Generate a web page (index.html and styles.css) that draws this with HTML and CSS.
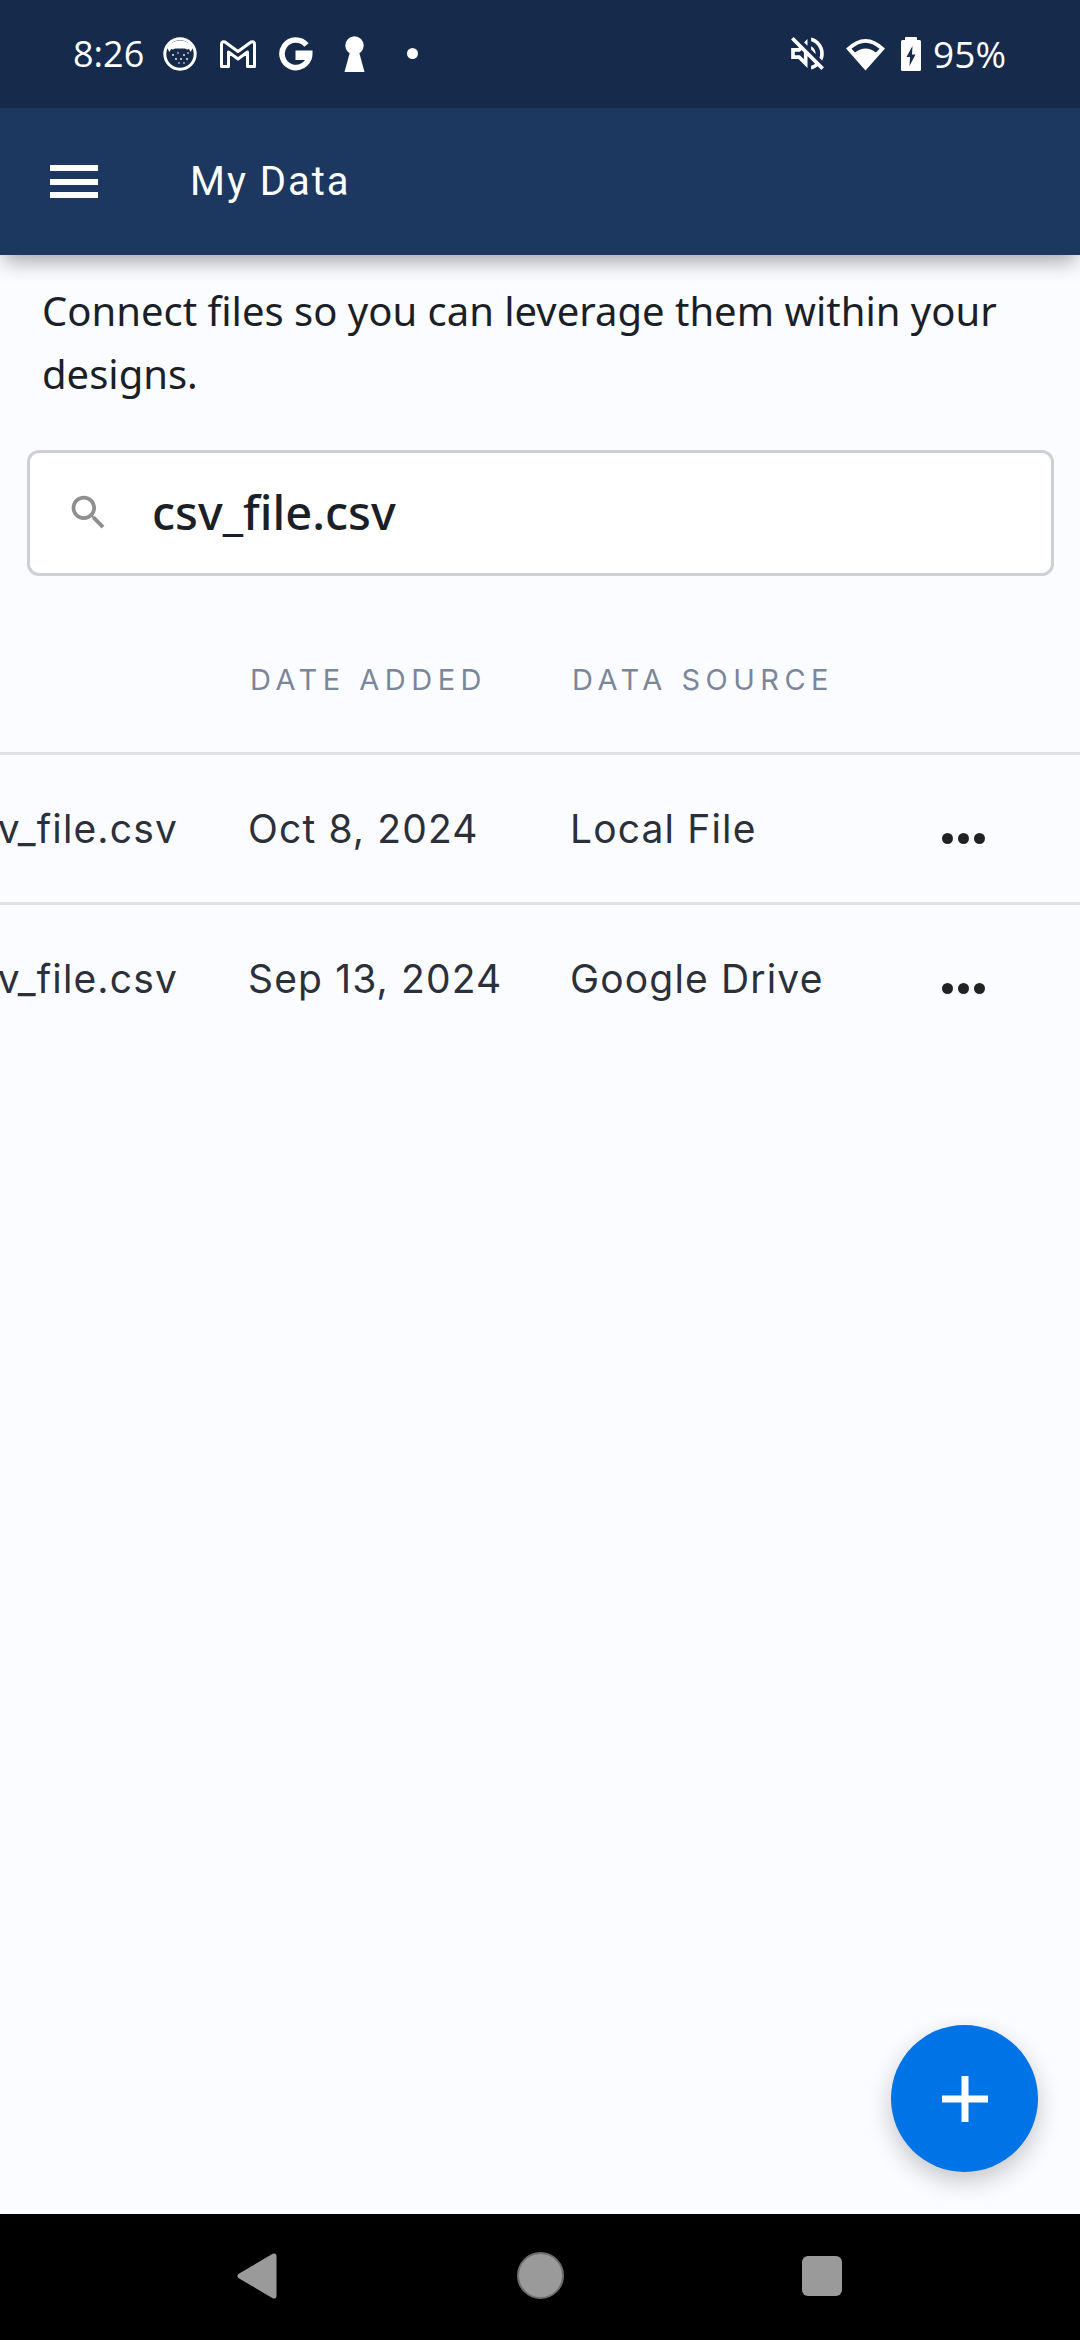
FILE: index.html
```html
<!DOCTYPE html>
<html lang="en">
<head>
<meta charset="utf-8">
<title>My Data</title>
<link rel="stylesheet" href="styles.css">
</head>
<body>
<div class="page">
  <div class="status">
    <div class="status-left">
      <span class="time">8:26</span>
      <svg class="ic-cup" viewBox="0 0 34 34"><circle cx="17" cy="17" r="15.2" fill="#162a4b" stroke="#fff" stroke-width="3"/><path d="M4 11A15 15 0 0 1 30 11L27.500 15 26 12 24 12.500 22 11.500H12L10 12.500 8 12 6.500 15Z" fill="#fff"/><g fill="#fff"><circle cx="10" cy="18" r=".9"/><circle cx="15" cy="16" r=".8"/><circle cx="21" cy="18" r=".9"/><circle cx="25" cy="16" r=".8"/><circle cx="13" cy="22" r=".9"/><circle cx="18" cy="22" r=".9"/><circle cx="24" cy="22" r=".9"/><circle cx="16" cy="26" r=".8"/><circle cx="21" cy="26" r=".8"/></g></svg>
      <svg class="ic-m" viewBox="0 0 36 28"><path d="M1.500 26.500V4.500Q1.500 .8 5 2L18 11.500 31 2Q34.500 .8 34.500 4.500V26.500H27.500V12L18 19 8.500 12V26.500Z" fill="none" stroke="#fff" stroke-width="3" stroke-linejoin="round"/></svg>
      <svg class="ic-g" viewBox="0 0 34 34"><path d="M27.500 8A13.800 13.800 0 1 0 30.500 18.500" fill="none" stroke="#fff" stroke-width="5.600"/><path d="M16.500 13.500H33.500V16.500Q33.500 21 32 23H16.500Z" fill="#fff"/></svg>
      <svg class="ic-key" viewBox="0 0 21 36"><circle cx="10.500" cy="9.500" r="9.200" fill="#fff"/><path d="M6.500 14H14.500L20.500 36H.5Z" fill="#fff"/></svg>
      <span class="dot"></span>
    </div>
    <div class="status-right">
      <svg class="ic-mute" viewBox="2.900 2.900 18.200 18.200"><path fill="#fff" d="M4.340 2.930L2.930 4.340 7.290 8.700 7 9H3v6h4l5 5v-6.590l4.180 4.180c-.65.490-1.380.880-2.180 1.110v2.060c1.340-.3 2.570-.920 3.610-1.750l2.050 2.050 1.410-1.410L4.340 2.930zM10 15.170L7.830 13H5v-2h2.830l.880-.880L10 11.410v3.760zM19 12c0 .820-.15 1.610-.41 2.340l1.530 1.530c.560-1.170.880-2.480.880-3.870 0-4.280-2.990-7.860-7-8.770v2.060c2.890.860 5 3.540 5 6.710zm-7-8l-1.880 1.880L12 7.760zm4.500 8c0-1.770-1.020-3.290-2.500-4.030v1.790l2.480 2.480c.010-.080.020-.160.020-.240z"/></svg>
      <svg class="ic-wifi" viewBox="0 0 39 34"><path fill="#fff" fill-rule="evenodd" d="M0 11.500Q19.500 -7.500 39 11.500L19.500 33.500ZM5.500 11.800 9 15.600Q19.500 7.500 30 15.600L33.500 11.800Q19.500 -.5 5.500 11.800Z"/></svg>
      <svg class="ic-batt" viewBox="0 0 20 34"><path fill="#fff" fill-rule="evenodd" d="M4 3V1Q4 0 5 0H15Q16 0 16 1V3H18.500Q20 3 20 4.500V32.500Q20 34 18.500 34H1.500Q0 34 0 32.500V4.500Q0 3 1.500 3ZM11.500 9 5.500 20H9L8.500 29 14.500 17.500H11Z"/></svg>
      <span class="pct">95%</span>
    </div>
  </div>

  <header class="appbar">
    <div class="burger"><span></span><span></span><span></span></div>
    <h1 class="title">My Data</h1>
  </header>

  <main class="main">
    <p class="intro">Connect files so you can leverage them within your designs.</p>
    <div class="search">
      <svg class="ic-search" viewBox="0 0 24 24"><path fill="#8f8f8f" d="M15.500 14h-.79l-.28-.27C15.410 12.590 16 11.110 16 9.500 16 5.910 13.090 3 9.500 3S3 5.910 3 9.500 5.910 16 9.500 16c1.610 0 3.090-.59 4.230-1.570l.27.28v.79l5 4.990L20.490 19l-4.990-5zm-6 0C7.010 14 5 11.990 5 9.500S7.010 5 9.500 5 14 7.010 14 9.500 11.990 14 9.500 14z"/></svg>
      <span class="search-text">csv_file.csv</span>
    </div>
    <div class="table">
      <div class="row head">
        <span class="cell"></span>
        <span class="cell th">DATE ADDED</span>
        <span class="cell th">DATA SOURCE</span>
        <span class="cell"></span>
      </div>
      <div class="row body">
        <span class="cell name"><span>csv_file.csv</span></span>
        <span class="cell">Oct 8, 2024</span>
        <span class="cell">Local File</span>
        <span class="cell more"><i></i><i></i><i></i></span>
      </div>
      <div class="row body last">
        <span class="cell name"><span>csv_file.csv</span></span>
        <span class="cell">Sep 13, 2024</span>
        <span class="cell">Google Drive</span>
        <span class="cell more"><i></i><i></i><i></i></span>
      </div>
    </div>
    <button class="fab" aria-label="Add"><svg viewBox="0 0 46 46"><path d="M19.500 0H26.500V19.500H46V26.500H26.500V46H19.500V26.500H0V19.500H19.500Z" fill="#fff"/></svg></button>
  </main>

  <nav class="navbar">
    <svg class="ic-back" viewBox="0 0 40 46"><path d="M37 3V43L3 23Z" fill="#9a9a9a" stroke="#9a9a9a" stroke-width="5" stroke-linejoin="round"/></svg>
    <span class="home"></span>
    <span class="recent"></span>
  </nav>
</div>
</body>
</html>
```
FILE: styles.css
```css
* { box-sizing: border-box; }
html, body { margin: 0; padding: 0; }
body { width: 1080px; height: 2340px; overflow: hidden; background: #fbfcff; }

.page { display: flex; flex-direction: column; width: 1080px; height: 2340px; }

/* status bar */
.status {
  flex: 0 0 108px;
  background: #162a4b;
  display: flex;
  justify-content: space-between;
  align-items: center;
  padding: 2px 74px 3px 73px;
  color: #fff;
  font-family: "Open Sans", sans-serif;
}
.status-left, .status-right { display: flex; align-items: center; }
.time { font-size: 36px; line-height: 40px; font-weight: 500; width: 90px; }
.ic-cup { width: 34px; height: 34px; }
.ic-m { width: 36px; height: 28px; margin-left: 23px; }
.ic-g { width: 34px; height: 34px; margin-left: 23px; }
.ic-key { width: 21px; height: 36px; margin-left: 31px; }
.dot { width: 11px; height: 11px; border-radius: 50%; background: #fff; margin-left: 42px; }
.ic-mute { width: 33px; height: 33px; }
.ic-wifi { width: 39px; height: 34px; margin-left: 22px; }
.ic-batt { width: 20px; height: 34px; margin-left: 16px; }
.pct { font-size: 37px; line-height: 40px; font-weight: 500; margin-left: 12px; }

/* app bar */
.appbar {
  flex: 0 0 147px;
  background: #1c3860;
  display: flex;
  align-items: center;
  padding-left: 50px;
  color: #fff;
  box-shadow: 0 10px 20px -4px rgba(0, 0, 0, .36);
  position: relative;
  z-index: 2;
}
.burger { width: 48px; height: 33px; display: flex; flex-direction: column; justify-content: space-between; }
.burger span { height: 6px; background: #fff; }
.title { margin: 0 0 0 92px; font: 400 40px/48px Roboto, sans-serif; letter-spacing: 2px; }

/* main */
.main { flex: 1; position: relative; background: #fbfcff; overflow: hidden; }
.intro {
  margin: 24px 60px 45px 42px;
  font: 400 40px/63px "Noto Sans", sans-serif;
  color: #1b1f27;
}
.search {
  margin-left: 27px;
  width: 1027px;
  height: 126px;
  background: #fff;
  border: 3px solid #cdd0d5;
  border-radius: 12px;
  display: flex;
  align-items: center;
  padding: 0 0 2px 36px;
}
.ic-search { width: 45px; height: 45px; }
.search-text { margin-left: 41px; font: 500 47px/60px "Noto Sans", sans-serif; color: #1b1f27; }

.row { display: grid; grid-template-columns: 248px 322px 372px 138px; align-items: center; }
.head { height: 179px; padding-top: 32px; border-bottom: 3px solid #dfe1e6; }
.body { height: 150px; border-bottom: 3px solid #dfe1e6; font: 400 39px/50px Inter, sans-serif; letter-spacing: 1.150px; color: #2b303a; }
.last { border-bottom-color: transparent; }
.th { font: 400 29px/36px Inter, sans-serif; letter-spacing: 5.500px; color: #7a869a; padding-left: 2px; }
.name { width: 178px; overflow: hidden; display: flex; justify-content: flex-end; white-space: nowrap; }
.more { display: flex; gap: 5px; padding-top: 20px; }
.more i { width: 11px; height: 11px; border-radius: 50%; background: #222; }

.fab {
  position: absolute;
  right: 42px;
  bottom: 42px;
  width: 147px;
  height: 147px;
  border: 0;
  padding: 0;
  border-radius: 50%;
  background: #0073e6;
  box-shadow: 0 9px 24px rgba(0, 0, 0, .22);
  display: flex;
  align-items: center;
  justify-content: center;
}
.fab svg { width: 46px; height: 46px; }

/* nav bar */
.navbar {
  flex: 0 0 126px;
  background: #000;
  display: flex;
  align-items: center;
  padding-left: 237px;
  padding-bottom: 3px;
}
.ic-back { width: 40px; height: 46px; }
.home { width: 47px; height: 47px; margin-left: 240px; border-radius: 50%; background: #9a9a9a; border: 2px solid #6e6e6e; }
.recent { width: 40px; height: 40px; margin-left: 238px; border-radius: 6px; background: #9a9a9a; }
```
